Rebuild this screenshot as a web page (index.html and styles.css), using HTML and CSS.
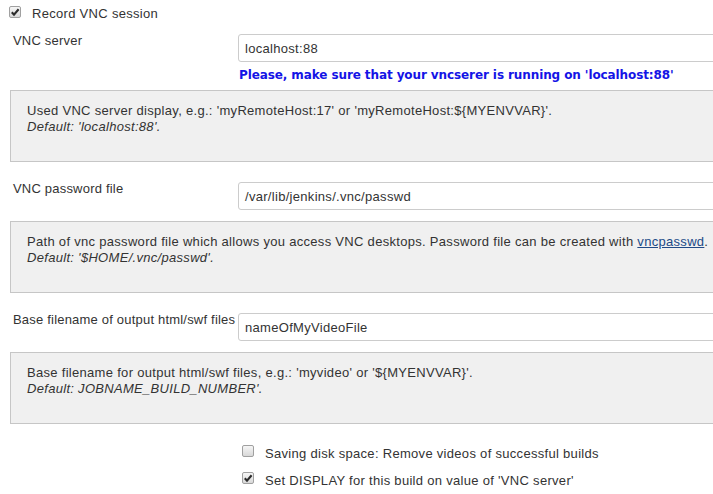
FILE: index.html
```html
<!DOCTYPE html>
<html>
<head>
<meta charset="utf-8">
<link rel="stylesheet" href="styles.css">
</head>
<body>
<div class="page">
  <div class="toprow">
    <span class="cb checked"><svg viewBox="0 0 12 12" width="12" height="12"><path d="M2.8 6.2 L5 8.6 L9.6 3.2" fill="none" stroke="#2b2b2b" stroke-width="2.1"/></svg></span>
    <span class="cbtext">Record VNC session</span>
  </div>

  <div class="row first">
    <div class="lbl">VNC server</div>
    <div class="field">
      <div class="input">localhost:88</div>
      <div class="warning">Please, make sure that your vncserer is running on 'localhost:88'</div>
    </div>
  </div>
  <div class="help">
    <div>Used VNC server display, e.g.: 'myRemoteHost:17' or 'myRemoteHost:${MYENVVAR}'.</div>
    <div><i>Default: 'localhost:88'.</i></div>
  </div>

  <div class="row">
    <div class="lbl">VNC password file</div>
    <div class="field">
      <div class="input">/var/lib/jenkins/.vnc/passwd</div>
    </div>
  </div>
  <div class="help">
    <div>Path of vnc password file which allows you access VNC desktops. Password file can be created with <a href="#">vncpasswd</a>.</div>
    <div><i>Default: '$HOME/.vnc/passwd'.</i></div>
  </div>

  <div class="row">
    <div class="lbl">Base filename of output html/swf files</div>
    <div class="field">
      <div class="input">nameOfMyVideoFile</div>
    </div>
  </div>
  <div class="help">
    <div>Base filename for output html/swf files, e.g.: 'myvideo' or '${MYENVVAR}'.</div>
    <div><i>Default: JOBNAME_BUILD_NUMBER'.</i></div>
  </div>

  <div class="opts">
    <div class="optrow">
      <span class="cb"></span>
      <span class="cbtext">Saving disk space: Remove videos of successful builds</span>
    </div>
    <div class="optrow">
      <span class="cb checked"><svg viewBox="0 0 12 12" width="12" height="12"><path d="M2.8 6.2 L5 8.6 L9.6 3.2" fill="none" stroke="#2b2b2b" stroke-width="2.1"/></svg></span>
      <span class="cbtext">Set DISPLAY for this build on value of 'VNC server'</span>
    </div>
  </div>
</div>
</body>
</html>
```

FILE: styles.css
```css
html, body {
  margin: 0;
  padding: 0;
  background: #fff;
  overflow: hidden;
}
body {
  font-family: "Liberation Sans", Arial, sans-serif;
  font-size: 13px;
  letter-spacing: 0.3px;
  color: #333;
}
.page {
  width: 780px;
}
.toprow {
  display: flex;
  height: 28px;
  align-items: center;
  padding-left: 9px;
}
.toprow .cb {
  align-self: flex-start;
  margin-top: 6px;
}
.cb {
  box-sizing: border-box;
  width: 12px;
  height: 12px;
  border: 1px solid #a0a0a0;
  border-radius: 2px;
  background: linear-gradient(#f6f6f6, #d8d8d8);
  display: inline-flex;
  align-items: center;
  justify-content: center;
  flex: none;
  overflow: visible;
}
.cb svg {
  display: block;
  flex: none;
}
.cbtext {
  margin-left: 11px;
  line-height: 16px;
}
.row {
  display: grid;
  grid-template-columns: 238px 1fr;
  margin-top: 20px;
}
.row.first {
  margin-top: 6px;
}
.lbl {
  padding-left: 13px;
  line-height: 13px;
  white-space: nowrap;
  letter-spacing: 0.2px;
}
.input {
  box-sizing: border-box;
  height: 28px;
  border: 1px solid #ccc;
  border-radius: 3px;
  padding-left: 6px;
  display: flex;
  align-items: center;
  color: #333;
}
.warning {
  margin-top: 6px;
  font-family: "DejaVu Sans", Verdana, sans-serif;
  font-weight: bold;
  font-size: 12px;
  letter-spacing: -0.1px;
  line-height: 14px;
  color: #1414e6;
  padding-left: 1px;
}
.help {
  margin: 11px 0 0 10px;
  background: #f0f0f0;
  border: 1px solid #c6c6c6;
  padding: 12px 16px 26px;
  line-height: 16px;
  font-size: 13px;
  color: #333;
}
.row.first + .help {
  margin-top: 8px;
}
.help a {
  color: #204a87;
  text-decoration: underline;
}
.opts {
  margin-top: 16px;
  padding-left: 242px;
}
.optrow {
  display: flex;
  height: 27px;
  align-items: center;
}
.optrow .cb {
  align-self: flex-start;
  margin-top: 5px;
}
```
